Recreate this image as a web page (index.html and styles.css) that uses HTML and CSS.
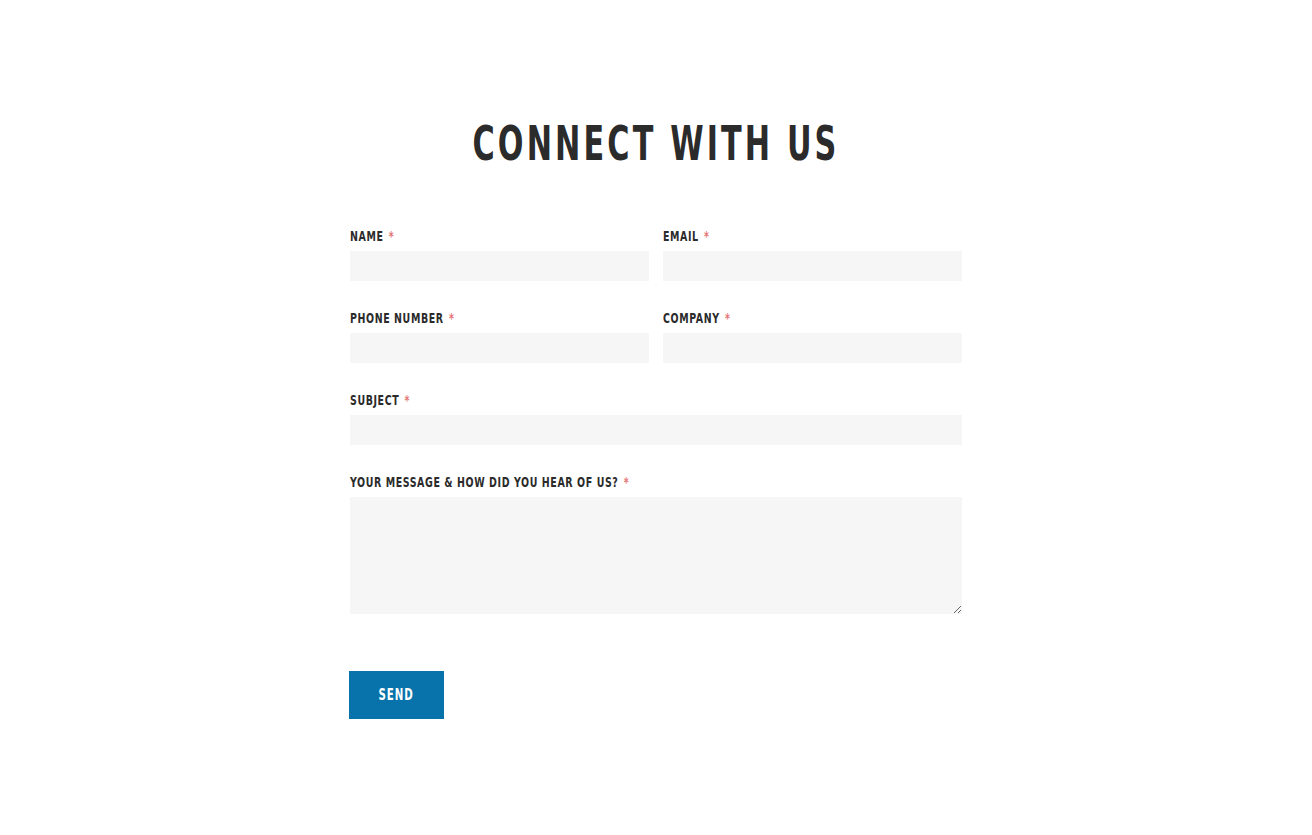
FILE: index.html
```html
<!DOCTYPE html>
<html lang="en">
<head>
    <meta charset="UTF-8">
    <meta name="viewport" content="width=device-width, initial-scale=1.0">
    <title>Connect With Us</title>
    <link rel="stylesheet" href="styles.css">
</head>
<body>
    <div class="container">
        <h1>Connect With Us</h1>

        <!-- Contact Form -->
        <form class="contact-form" onsubmit="return false;">
            <div class="row">
                <div class="field">
                    <label for="nameInput">Name <span class="req">*</span></label>
                    <input type="text" id="nameInput">
                </div>
                <div class="field">
                    <label for="emailInput">Email <span class="req">*</span></label>
                    <input type="text" id="emailInput">
                </div>
            </div>
            <div class="row">
                <div class="field">
                    <label for="phoneInput">Phone Number <span class="req">*</span></label>
                    <input type="text" id="phoneInput">
                </div>
                <div class="field">
                    <label for="companyInput">Company <span class="req">*</span></label>
                    <input type="text" id="companyInput">
                </div>
            </div>
            <div class="field">
                <label for="subjectInput">Subject <span class="req">*</span></label>
                <input type="text" id="subjectInput">
            </div>
            <div class="field">
                <label for="messageInput">Your Message &amp; How Did You Hear Of Us? <span class="req">*</span></label>
                <textarea id="messageInput"></textarea>
            </div>
            <button type="submit"><span>Send</span></button>
        </form>
    </div>
</body>
</html>
```

FILE: styles.css
```css
body {
    font-family: "DejaVu Sans Condensed", "DejaVu Sans", Arial, sans-serif;
    background-color: #fff;
    color: #2b2b2b;
    margin: 0;
    padding: 0;
}
.container {
    width: 612px;
    margin: 0 auto;
    padding-top: 118px;
}
/* no narrow font installed, so squeeze the condensed one a bit more */
h1 {
    font-size: 48px;
    line-height: 50px;
    font-weight: bold;
    letter-spacing: 4.5px;
    text-transform: uppercase;
    text-align: center;
    margin: 0 0 60px;
    transform: scaleX(0.7);
}
.row {
    display: flex;
    gap: 14px;
}
.row .field {
    flex: 1;
}
.field {
    margin-bottom: 29px;
}
label {
    display: block;
    font-size: 14px;
    line-height: 16px;
    font-weight: bold;
    letter-spacing: 0.8px;
    text-transform: uppercase;
    white-space: nowrap;
    margin-bottom: 7px;
    transform: scaleX(0.75);
    transform-origin: left center;
}
.req {
    color: #e57373;
    margin-left: 2px;
}
input[type="text"], textarea {
    display: block;
    width: 100%;
    box-sizing: border-box;
    height: 30px;
    border: none;
    background-color: #f6f6f6;
    font: inherit;
    padding: 0 10px;
}
textarea {
    height: 117px;
    resize: vertical;
}
button {
    margin-top: 28px;
    margin-left: -1px;
    width: 95px;
    height: 48px;
    border: none;
    background-color: #0873ab;
    color: #fff;
    font-family: inherit;
    font-size: 15px;
    font-weight: bold;
    letter-spacing: 1.2px;
    text-transform: uppercase;
    cursor: pointer;
}
button span {
    display: inline-block;
    transform: scaleX(0.76);
}
```
